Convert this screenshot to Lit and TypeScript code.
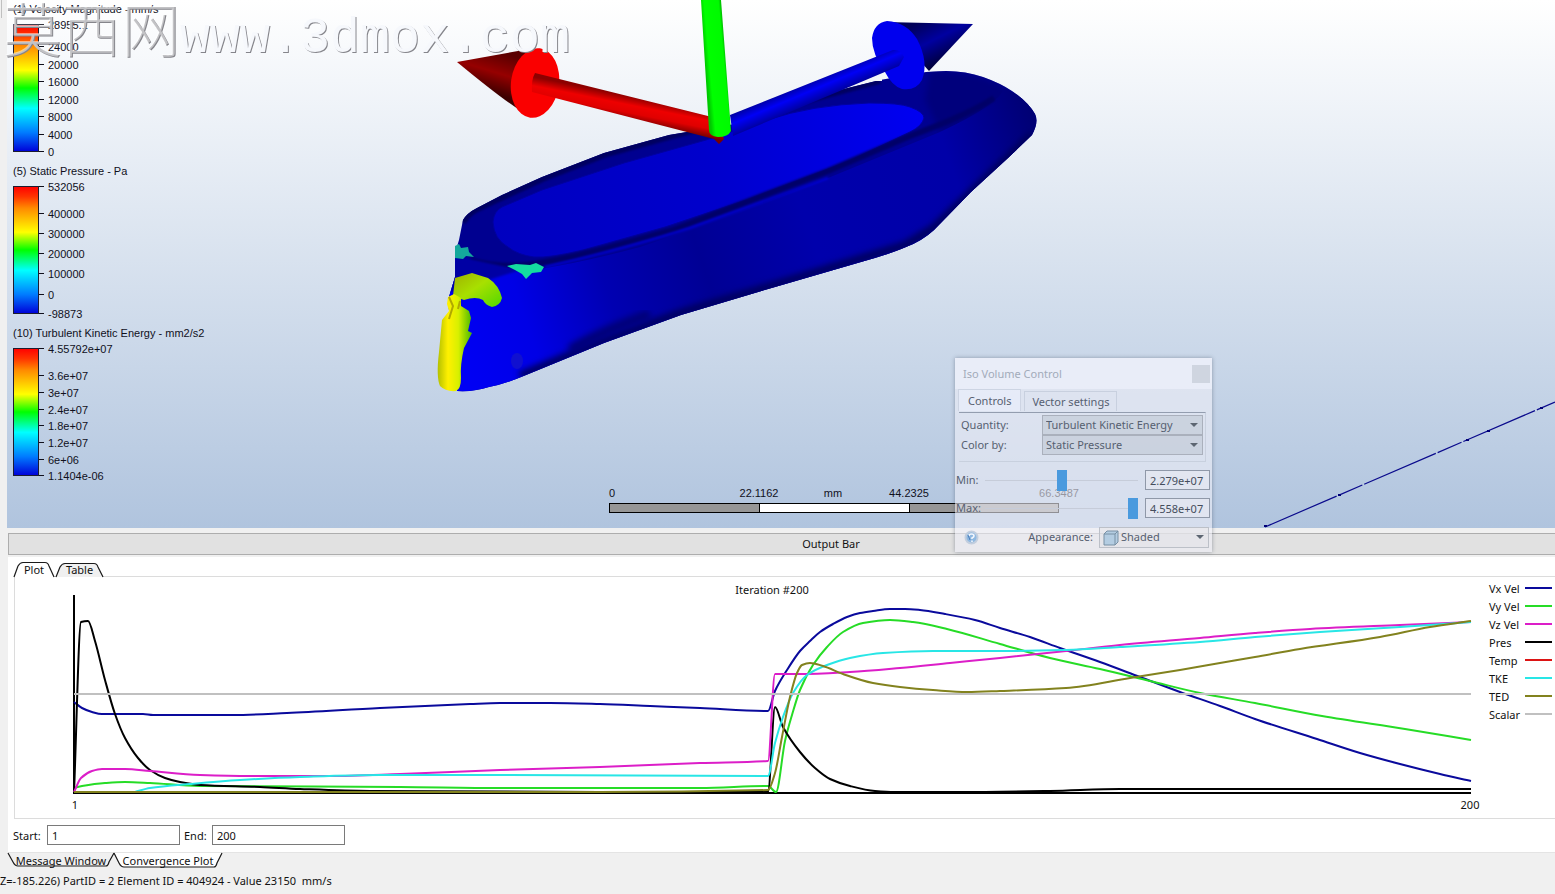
import { LitElement, html, svg, css } from "lit";
import { customElement, property } from "lit/decorators.js";

const FONT = css`"Noto Sans", "Open Sans", sans-serif`;

interface Tick { at: number; label: string; }
interface Scale { title: string; ticks: Tick[]; }

const SCALES: Scale[] = [
  { title: "(1) Velocity Magnitude - mm/s", ticks: [
    { at: 0, label: "28955.1" }, { at: 22, label: "24000" }, { at: 40, label: "20000" }, { at: 57, label: "16000" },
    { at: 75, label: "12000" }, { at: 92, label: "8000" }, { at: 110, label: "4000" }, { at: 127, label: "0" } ] },
  { title: "(5) Static Pressure - Pa", ticks: [
    { at: 0, label: "532056" }, { at: 27, label: "400000" }, { at: 47, label: "300000" }, { at: 67, label: "200000" },
    { at: 87, label: "100000" }, { at: 108, label: "0" }, { at: 127, label: "-98873" } ] },
  { title: "(10) Turbulent Kinetic Energy - mm2/s2", ticks: [
    { at: 0, label: "4.55792e+07" }, { at: 27, label: "3.6e+07" }, { at: 44, label: "3e+07" }, { at: 61, label: "2.4e+07" },
    { at: 77, label: "1.8e+07" }, { at: 94, label: "1.2e+07" }, { at: 111, label: "6e+06" }, { at: 127, label: "1.1404e-06" } ] },
];

interface Series { name: string; color: string; points: string; }

const SERIES: Series[] = [
  { name: "Vx Vel", color: "#0a0a9c", points: "74,702 82,708 92,712 102,714 143,714 153,715 233,715 287,713 380,708 470,704 500,703 550,703 600,704 650,706 700,708 768,711 775,691 787,670 800,651 810,641 820,632 833,624 847,617 860,613 873,611 890,609 905,609 920,610 945,614 975,620 1000,628 1030,637 1060,648 1100,662 1140,677 1180,692 1220,706 1255,719 1317,739 1360,753 1400,764 1440,774 1471,781" },
  { name: "Vy Vel", color: "#26dc26", points: "74,788 82,786 105,783 125,782 150,783 200,786 400,787 500,788 700,788 768,786 776,792 785,741 792,715 800,690 813,665 827,647 843,632 863,623 890,620 913,622 947,629 1000,644 1050,658 1100,669 1150,681 1200,693 1255,703 1322,716 1405,729 1471,740" },
  { name: "Vz Vel", color: "#dc1ec8", points: "74,792 81,778 92,771 102,769 125,769 150,771 200,775 250,776 330,776 400,774 500,770 600,767 700,763 768,761 775,674 800,674 850,672 900,668 950,663 1000,658 1066,651 1120,645 1200,638 1255,633 1310,629 1400,625 1471,622" },
  { name: "Pres", color: "#000000", points: "74,793 81,622 88,621 95,641 105,680 115,714 125,738 138,758 150,770 165,778 180,782 200,785 260,787 300,789 370,791 600,792 768,792 775,707 783,727 800,752 815,768 830,779 850,786 875,791 895,792 960,792 1050,791 1120,789 1471,789" },
  { name: "Temp", color: "#dc1414", points: "" },
  { name: "TKE", color: "#28e6e6", points: "135,792 150,788 190,784 240,780 300,777 380,775 500,775 768,776 775,743 783,717 793,693 807,675 827,665 850,658 883,653 933,651 1000,651 1066,650 1120,647 1200,642 1255,637 1320,632 1400,627 1471,622" },
  { name: "TED", color: "#82821e", points: "74,792 600,792 768,790 775,773 782,737 790,697 797,673 802,665 810,663 823,666 843,674 873,683 900,687 933,690 967,692 1000,691 1066,688 1130,678 1180,670 1220,663 1255,657 1300,649 1380,637 1430,627 1471,621" },
  { name: "Scalar", color: "#c0c0c0", points: "74,694 1471,694" },
];

/** Monotone cubic path through "x,y" pairs; it never overshoots a sample. */
function curve(points: string): string {
  const p = points.split(" ").map((s) => s.split(",").map(Number));
  const n = p.length;
  const slope = p.slice(1).map((q, i) => (q[1] - p[i][1]) / (q[0] - p[i][0]));
  const tangent = p.map((_, i) => {
    if (i === 0) return slope[0];
    if (i === n - 1) return slope[n - 2];
    const a = slope[i - 1], b = slope[i];
    return a * b <= 0 ? 0 : (2 * a * b) / (a + b);
  });
  let d = `M${p[0][0]} ${p[0][1]}`;
  for (let i = 1; i < n; i++) {
    const h = (p[i][0] - p[i - 1][0]) / 3;
    d += `C${p[i - 1][0] + h} ${p[i - 1][1] + h * tangent[i - 1]} ${p[i][0] - h} ${p[i][1] - h * tangent[i]} ${p[i][0]} ${p[i][1]}`;
  }
  return d;
}

/** Colour bar with its title and tick values. */
@customElement("color-legend")
class ColorLegend extends LitElement {
  @property({ attribute: false }) scale!: Scale;
  static styles = css`
    :host { display: grid; gap: 8px; font: 11px/14px "Liberation Sans", Arial, sans-serif; color: #10101c; }
    svg { display: block; overflow: visible; }
    .title { white-space: nowrap; }
  `;
  render() {
    return html`
      <div class="title">${this.scale.title}</div>
      <svg width="110" height="128" font-size="11" fill="#10101c">
        <defs>
          <linearGradient id="g" x1="0" y1="0" x2="0" y2="1">
            <stop offset="0" stop-color="#ff0000" /><stop offset=".08" stop-color="#ff3400" />
            <stop offset=".17" stop-color="#ff8a00" /><stop offset=".36" stop-color="#ffff00" />
            <stop offset=".5" stop-color="#00ff00" /><stop offset=".66" stop-color="#00ffff" />
            <stop offset=".85" stop-color="#007cff" /><stop offset="1" stop-color="#0000d8" />
          </linearGradient>
        </defs>
        <rect x="0.5" y="0.5" width="25" height="127" fill="url(#g)" stroke="#1c1c30" />
        ${this.scale.ticks.map((t) => svg`
          <path d=${`M26 ${t.at + 0.5}h5`} stroke="#10101c" />
          <text x="35" y=${t.at + 5}>${t.label}</text>`)}
      </svg>`;
  }
}

/** Slanted tab, opening downwards or upwards. */
@customElement("slant-tab")
class SlantTab extends LitElement {
  @property() label = "";
  @property({ type: Number }) width = 40;
  @property({ type: Boolean }) active = false;
  @property({ type: Boolean }) flip = false;
  static styles = css`
    :host { display: block; }
    button { position: relative; display: block; height: 15px; padding: 0; border: 0; background: none; font: 11px/15px ${FONT}; color: #111; white-space: nowrap; }
    svg { position: absolute; inset: 0; overflow: visible; }
    span { position: relative; }
  `;
  render() {
    const w = this.width;
    const lip = this.active ? 0 : 1;
    const d = this.flip
      ? `M0 0L5 ${10 - lip}Q7 ${14 - lip} 10 ${14 - lip}H${w - 8}Q${w - 6} ${14 - lip} ${w - 5} ${10 - lip}L${w} 0`
      : `M0 15L4 ${4 + lip}Q6 ${lip + 0.5} 9 ${lip + 0.5}H${w - 9}Q${w - 6} ${lip + 0.5} ${w - 5} ${4 + lip}L${w} 15`;
    return html`<button style="width:${w}px">
      <svg width=${w} height="15" aria-hidden="true"><path d=${d} fill=${this.active ? "#fff" : "#f0f0f0"} stroke="#1a1a1a" stroke-width="1.2" /></svg>
      <span>${this.label}</span></button>`;
  }
}

/** Result model with its axis triad and the ruler below it. */
@customElement("model-scene")
class ModelScene extends LitElement {
  static styles = css`
    :host { display: block; min-width: 0; }
    svg { display: block; width: 100%; height: 100%; font: 11px "Liberation Sans", Arial, sans-serif; }
  `;
  render() {
    return html`<svg viewBox="7 0 1548 528" preserveAspectRatio="xMinYMin slice" role="img" aria-label="Hull model">
      <defs>
        <linearGradient id="side" gradientUnits="userSpaceOnUse" x1="450" y1="330" x2="1037" y2="130">
          <stop offset="0" stop-color="#0000f4" /><stop offset=".12" stop-color="#0000e6" />
          <stop offset=".26" stop-color="#0000b2" /><stop offset=".42" stop-color="#000094" />
          <stop offset=".6" stop-color="#0000ac" /><stop offset=".85" stop-color="#0000a8" />
          <stop offset="1" stop-color="#000074" />
        </linearGradient>
        <linearGradient id="well" gradientUnits="userSpaceOnUse" x1="493" y1="230" x2="924" y2="110">
          <stop offset="0" stop-color="#0000c0" /><stop offset=".5" stop-color="#0000cc" /><stop offset="1" stop-color="#0000f2" />
        </linearGradient>
        <linearGradient id="redcone" gradientUnits="userSpaceOnUse" x1="500" y1="52" x2="488" y2="92">
          <stop offset="0" stop-color="#5a0000" /><stop offset=".5" stop-color="#960000" /><stop offset="1" stop-color="#3c0000" />
        </linearGradient>
        <linearGradient id="redrod" gradientUnits="userSpaceOnUse" x1="630" y1="96" x2="625" y2="121">
          <stop offset="0" stop-color="#8c0000" /><stop offset=".35" stop-color="#ee0000" /><stop offset=".65" stop-color="#e00000" /><stop offset="1" stop-color="#780000" />
        </linearGradient>
        <linearGradient id="greenrod" gradientUnits="userSpaceOnUse" x1="705" y1="62" x2="727" y2="60">
          <stop offset="0" stop-color="#00c800" /><stop offset=".2" stop-color="#00ff00" /><stop offset=".85" stop-color="#00fa00" /><stop offset="1" stop-color="#00a800" />
        </linearGradient>
        <linearGradient id="bluerod" gradientUnits="userSpaceOnUse" x1="808" y1="83" x2="816" y2="102">
          <stop offset="0" stop-color="#0000aa" /><stop offset=".4" stop-color="#0000f6" /><stop offset="1" stop-color="#00009c" />
        </linearGradient>
        <linearGradient id="bluecone" gradientUnits="userSpaceOnUse" x1="920" y1="22" x2="942" y2="66">
          <stop offset="0" stop-color="#000058" /><stop offset=".45" stop-color="#0000a0" /><stop offset="1" stop-color="#000030" />
        </linearGradient>
        <linearGradient id="nose" x1="0" y1="0" x2="1" y2="0">
          <stop offset="0" stop-color="#b4c000" /><stop offset=".3" stop-color="#fff000" /><stop offset=".6" stop-color="#d8f000" /><stop offset="1" stop-color="#48b800" />
        </linearGradient>
        <linearGradient id="cap" x1="0" y1="0" x2="1" y2="1">
          <stop offset="0" stop-color="#a0b000" /><stop offset=".45" stop-color="#a8e000" /><stop offset="1" stop-color="#50d800" />
        </linearGradient>
        <filter id="soft"><feGaussianBlur stdDeviation="3" /></filter>
        <filter id="fine"><feGaussianBlur stdDeviation="1" /></filter>
        <clipPath id="hull"><path d="M926 72L946 71Q966 71 983 77Q1000 83 1012 91Q1028 102 1035 114Q1039 122 1032 135L1008 158L971 192L934 230Q922 241 906 247Q890 254 861 262L775 287L681 315L604 343L526 375Q505 384 489 387Q474 392 457 391L448 300L455 277V253L459 240L463 220Q467 213 477 208L502 195L542 177L604 153L669 135L735 124L800 100L880 80Z" /></clipPath>
      </defs>

      <g clip-path="url(#hull)">
        <path d="M430 60H1045V400H430Z" fill="#000090" />
        <path d="M462 222Q468 212 477 208L542 178L604 154L669 136L760 112L880 80" fill="none" stroke="#000060" stroke-width="8" filter="url(#fine)" />
        <path d="M930 70Q985 72 1012 92Q1000 112 940 132L925 100Z" fill="#00007c" filter="url(#soft)" />
        <path d="M450 255Q480 268 534 270Q580 263 640 247Q720 220 828 178L940 132Q1000 104 1004 88L1050 110V400H430Z" fill="url(#side)" />
        <path d="M493 222Q494 211 502 207L542 190L624 163L706 140L767 120Q812 105 869 103Q900 103 910 107Q924 112 924 118Q922 126 910 132L849 161L746 200L665 227L583 250Q550 258 534 257Q518 255 508 247Q494 239 493 222Z" fill="url(#well)" stroke="#0000a0" />
        <path d="M470 260Q500 269 534 264Q570 258 604 249L673 230L767 194L828 171L910 136Q970 114 994 98" fill="none" stroke="#000068" stroke-width="6" filter="url(#fine)" />
        <path d="M545 267Q620 250 690 228L828 178" fill="none" stroke="#0000d8" stroke-width="2" filter="url(#fine)" />
        <path d="M520 376L604 341L681 313L775 285L906 245L934 228L1032 135" fill="none" stroke="#00005c" stroke-width="8" filter="url(#soft)" />
        <path d="M570 350Q600 332 650 314" fill="none" stroke="#000078" stroke-width="10" filter="url(#soft)" />
        <path d="M455 250L466 258L520 270L450 292Z" fill="#0000a4" filter="url(#fine)" />
        <ellipse cx="517" cy="361" rx="6" ry="8" fill="#1010d0" />
      </g>

      <path d="M455 246L459 244L461 248L468 247L469 252L474 257L466 256L463 259L455 258Z" fill="#14a89c" />
      <path d="M507 266L516 264L530 265L536 263L544 267L541 272L532 273L526 279L522 274L515 270Z" fill="#14dca0" />
      <path d="M455 278L472 273L488 278Q499 285 502 298Q500 306 492 307Q485 305 483 300Q476 296 464 300L453 296Z" fill="url(#cap)" />
      <path d="M448 297L454 294L461 298V306L469 311L471 318L468 331L472 333L464 348Q460 365 461 378Q461 389 456 391Q446 392 440 386Q436 377 439 352L442 320L449 311L447 304Z" fill="url(#nose)" />
      <path d="M449 297L453 306L449 319M460 301L458 309" fill="none" stroke="#b0a800" stroke-width="2" />

      <path d="M871 80L882 78V81H868Z" fill="#f4f6fb" />
      <path d="M885 22L973 24L929 71Z" fill="url(#bluecone)" />
      <path d="M887 21Q906 22 917 39Q929 62 922 80Q916 91 902 89Q892 86 885 72Q872 54 872 38Q874 23 887 21Z" fill="#0000ee" />
      <path d="M730 115L893 50Q901 49 904 57L899 66L733 136Z" fill="url(#bluerod)" />
      <path d="M457 62L535 48L532 117Q515 110 457 62Z" fill="url(#redcone)" />
      <ellipse cx="535" cy="83" rx="24" ry="35" transform="rotate(8 535 83)" fill="#fa0000" />
      <path d="M535 73Q531 80 532 92L714 139L719 144L724 139L716 118Z" fill="url(#redrod)" />
      <path d="M701 0H721L731 131Q728 137 718 137Q709 136 709 130Z" fill="url(#greenrod)" />

      <path d="M1265 527L1555 402" stroke="#0a0a8c" stroke-width="1.2" stroke-dasharray="78 2 26 2" />
      <path d="M1264 526h3M1338 495h3M1466 440h3M1487 431h3M1540 408h3" stroke="#000078" stroke-width="2" />

      <g stroke="#000"><rect x="609.5" y="503.5" width="449" height="9" fill="#969696" /><rect x="759.5" y="503.5" width="150" height="9" fill="#fff" /></g>
      <g text-anchor="middle" fill="#10101c">
        <text x="612" y="497">0</text><text x="759" y="497">22.1162</text><text x="833" y="497">mm</text>
        <text x="909" y="497">44.2325</text><text x="1059" y="497">66.3487</text>
      </g>
    </svg>`;
  }
}

@customElement("convergence-plot")
class ConvergencePlot extends LitElement {
  static styles = css`
    :host { display: block; }
    svg { display: block; width: 100%; font: 11px ${FONT}; }
  `;
  render() {
    return html`<svg viewBox="15 577 1540 241" role="img" aria-label="Convergence plot" fill="#111">
      <text x="772" y="594" text-anchor="middle">Iteration #200</text>
      <path d="M74 595V794M73 793H1471" stroke="#000" stroke-width="2" />
      <g fill="none" stroke-width="2" stroke-linejoin="round">
        ${["Vx Vel", "Vy Vel", "Pres", "Vz Vel", "TKE", "TED", "Scalar"].map((n) => {
          const s = SERIES.find((x) => x.name === n)!;
          return svg`<path d=${curve(s.points)} stroke=${s.color} />`;
        })}
      </g>
      <text x="75" y="809" text-anchor="middle">1</text>
      <text x="1470" y="809" text-anchor="middle">200</text>
      ${SERIES.map((s, i) => svg`
        <text x="1489" y=${593 + i * 18}>${s.name}</text>
        <path d=${`M1525 ${588 + i * 18}h27`} stroke=${s.color} stroke-width="2" />`)}
    </svg>`;
  }
}

@customElement("iso-dialog")
class IsoDialog extends LitElement {
  static styles = css`
    :host { display: block; box-sizing: border-box; width: 257px; background: rgba(238, 239, 246, 0.6); box-shadow: 0 0 4px rgba(60, 70, 90, 0.45); font: 11px/16px ${FONT}; color: #566070; }
    header { display: flex; align-items: center; justify-content: space-between; height: 31px; padding: 0 2px 0 8px; background: rgba(244, 246, 255, 0.5); color: #a2abba; font-size: 11px; }
    .close { width: 18px; height: 18px; padding: 0; border: 0; background: rgba(190, 196, 208, 0.6); }
    .tabs { display: flex; align-items: flex-end; gap: 3px; padding: 0 3px; height: 22px; }
    .tab { height: 20px; padding: 0 7px; border: 1px solid rgba(180, 190, 205, 0.5); border-bottom: 0; background: none; font: inherit; color: inherit; }
    .tab.on { height: 22px; padding: 0 9px; background: rgba(240, 244, 255, 0.5); }
    .fields { display: grid; grid-template-columns: 81px 1fr; align-items: center; margin: 1px 6px 0 4px; padding: 2px 2px 6px; border: 1px solid rgba(190, 198, 212, 0.6); border-top-color: #939daf; border-left: 0; }
    .pick { position: relative; display: flex; }
    select { appearance: none; width: 100%; height: 20px; padding: 0 3px; border: 1px solid #aab0bc; border-radius: 0; background: rgba(190, 198, 210, 0.55); font: inherit; color: inherit; }
    .pick svg.arrow { position: absolute; right: 5px; top: 7px; }
    .range { display: grid; grid-template-columns: 29px 153px 64px; column-gap: 0; align-items: center; height: 28px; padding-left: 1px; justify-content: start; }
    .range .value { margin-left: 7px; width: 65px; }
    .value { box-sizing: border-box; height: 20px; padding: 0 0 0 4px; border: 1px solid #8f98a8; background: rgba(232, 234, 242, 0.6); font: inherit; color: #454d5c; }
    input[type="range"] { appearance: none; width: 153px; height: 22px; margin: 0; background: linear-gradient(#c6ccd9, #c6ccd9) center / 100% 1px no-repeat; }
    input[type="range"]::-webkit-slider-thumb { appearance: none; width: 10px; height: 21px; background: #4a9ade; }
    .ranges { margin-top: 4px; }
    footer { display: flex; align-items: center; height: 26px; padding: 2px 3px 2px 9px; }
    .help { width: 15px; height: 15px; padding: 0; border: 0; background: none; }
    .help svg, .cube { display: block; }
    footer label { margin-left: auto; margin-right: 6px; }
    footer .pick { width: 110px; }
    footer select { padding-left: 21px; height: 21px; background: rgba(225, 226, 230, 0.5); border-color: #bcc0c8; }
    .cube { position: absolute; left: 4px; top: 3px; }
  `;
  arrow() {
    return html`<svg class="arrow" width="8" height="6" aria-hidden="true"><path d="M0 1H8L4 5Z" fill="#5d6672" /></svg>`;
  }
  render() {
    return html`
      <header><span>Iso Volume Control</span><button class="close" aria-label="Close"></button></header>
      <div class="tabs"><button class="tab on">Controls</button><button class="tab">Vector settings</button></div>
      <div class="fields">
        <label for="q">Quantity:</label>
        <div class="pick"><select id="q"><option>Turbulent Kinetic Energy</option></select>${this.arrow()}</div>
        <label for="c">Color by:</label>
        <div class="pick"><select id="c"><option>Static Pressure</option></select>${this.arrow()}</div>
      </div>
      <div class="ranges">
        <div class="range"><label for="min">Min:</label><input id="min" type="range" min="0" max="100" value="50" /><input class="value" aria-label="Min value" value="2.279e+07" /></div>
        <div class="range"><label for="max">Max:</label><input id="max" type="range" min="0" max="100" value="100" /><input class="value" aria-label="Max value" value="4.558e+07" /></div>
      </div>
      <footer>
        <button class="help" aria-label="Help"><svg width="15" height="15"><circle cx="7.5" cy="7.5" r="6" fill="#8fb8e0" stroke="#c2cede" stroke-width="2" /><path d="M5 6Q5 4 7.5 4T10 6Q10 7 8 8V9M8 10.5V12" fill="none" stroke="#f2f6fc" stroke-width="1.6" /><path d="M4 5L6 10" stroke="#4a7cba" /></svg></button>
        <label for="a">Appearance:</label>
        <div class="pick"><select id="a"><option>Shaded</option></select>
          <svg class="cube" width="16" height="16" aria-hidden="true"><path d="M1 4L4 1H15V12L12 15H1Z" fill="#b4cde2" stroke="#7890a4" /><path d="M1 4H12V15M12 4L15 1" fill="none" stroke="#7890a4" /></svg>${this.arrow()}</div>
      </footer>`;
  }
}

@customElement("app-root")
class AppRoot extends LitElement {
  static styles = css`
    :host { position: relative; display: flex; flex-direction: column; min-height: 100vh; overflow: hidden; background: #f0f0f0; font: 11px/15px ${FONT}; color: #111; }
    .top { display: flex; flex: 1; }
    .rail { width: 7px; flex: none; }
    .rail i { display: block; width: 1px; height: 18px; border-right: 1px solid #c0c0c0; }
    .view { display: grid; flex: 1; min-width: 0; background: linear-gradient(#ffffff, #b0c4de); }
    .view > * { grid-area: 1 / 1; }
    model-scene { height: 0; min-height: 100%; }
    .legends { z-index: 1; display: grid; gap: 12px; align-content: start; justify-self: start; padding: 2px 6px; }
    .mark { z-index: 2; align-self: start; justify-self: start; margin: -3px 0 0 -4px; white-space: nowrap; color: #f6f8fc; text-shadow: 1px 1px 0 #85858b; font: 300 50px/60px "Liberation Mono", monospace; pointer-events: none; }
    .mark b { font: 300 59px/60px "Noto Sans CJK SC", sans-serif; color: rgba(255, 255, 255, 0.5); }
    iso-dialog { position: absolute; z-index: 3; left: 955px; top: 358px; }
    .bar { box-sizing: border-box; height: 22px; margin: 5px 0 0 8px; padding-left: 98px; border: solid #adadad; border-width: 1px 0 1px 1px; background: #e1e1e1; text-align: center; line-height: 20px; }
    .panel { margin: 2px 0 0 8px; padding: 5px 0 7px 6px; background: #fff; }
    .tabs { display: flex; gap: 2px; margin-bottom: -1px; }
    .page { border: solid #dcdcdc; border-width: 1px 0 1px 1px; }
    form { display: flex; align-items: center; padding-top: 6px; margin-left: -1px; }
    form label { width: 34px; }
    form label + input + label { width: 28px; margin-left: 4px; }
    form input { box-sizing: border-box; width: 133px; height: 20px; padding: 0 4px; border: 1px solid #7a7a7a; background: #fff; font: inherit; color: inherit; }
    .bottom { display: flex; margin-left: 8px; border-top: 1px solid #e4e4e4; }
    .status { padding: 5px 0; white-space: pre; line-height: 16px; }
  `;
  render() {
    return html`
      <div class="top">
        <div class="rail"><i></i></div>
        <main class="view">
          <model-scene></model-scene>
          <div class="legends">${SCALES.map((s) => html`<color-legend .scale=${s}></color-legend>`)}</div>
          <div class="mark"><b>莫西网</b>www.3dmox.com</div>
        </main>
      </div>
      <div class="bar">Output Bar</div>
      <section class="panel">
        <div class="tabs"><slant-tab label="Plot" width="40" active></slant-tab><slant-tab label="Table" width="47"></slant-tab></div>
        <div class="page"><convergence-plot></convergence-plot></div>
        <form><label for="start">Start:</label><input id="start" value="1" /><label for="end">End:</label><input id="end" value="200" /></form>
      </section>
      <div class="bottom"><slant-tab label="Message Window" width="106" flip></slant-tab><slant-tab label="Convergence Plot" width="108" active flip></slant-tab></div>
      <div class="status">Z=-185.226) PartID = 2 Element ID = 404924 - Value 23150  mm/s</div>
      <iso-dialog></iso-dialog>`;
  }
}
